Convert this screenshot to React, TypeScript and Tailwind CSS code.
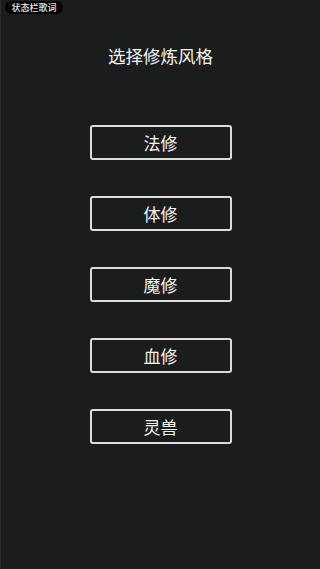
import React from 'react';

const styles = ['法修', '体修', '魔修', '血修', '灵兽'];

export default function App() {
  return (
    <div
      className="relative flex h-[569px] w-[320px] flex-col items-center overflow-hidden border-l border-[#2a2b2b] bg-[#1b1c1c] text-white"
      style={{ fontFamily: '"Noto Sans CJK SC", "Noto Sans", sans-serif' }}
    >
      <div className="absolute left-[4px] top-[1px] flex h-[13px] w-[58px] items-center justify-center rounded-full bg-black text-[9px] font-medium leading-none text-[#ececec]">
        状态栏歌词
      </div>
      <h1 className="mt-[44px] text-[17.5px] leading-[24px] text-[#f4f4f4]">选择修炼风格</h1>
      <div className="mt-[57px] flex flex-col gap-[36px]">
        {styles.map((s) => (
          <button
            key={s}
            type="button"
            className="flex h-[35px] w-[142px] items-center justify-center rounded-[3px] border-2 border-[#dcdcdc] text-[17px] leading-none text-[#f4f4f4]"
          >
            {s}
          </button>
        ))}
      </div>
    </div>
  );
}
